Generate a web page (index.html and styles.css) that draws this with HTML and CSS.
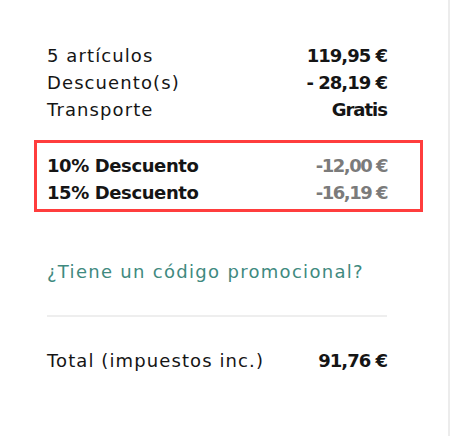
FILE: index.html
```html
<!DOCTYPE html>
<html lang="es">
<head>
<meta charset="utf-8">
<link rel="stylesheet" href="styles.css">
</head>
<body>
<div class="panel">
  <div class="summary">
    <div class="row"><span>5 artículos</span><span class="val">119,95 €</span></div>
    <div class="row"><span>Descuento(s)</span><span class="val">- 28,19 €</span></div>
    <div class="row"><span>Transporte</span><span class="val">Gratis</span></div>
  </div>
  <div class="discounts">
    <div class="row"><span class="dname">10% Descuento</span><span class="dval">-12,00 €</span></div>
    <div class="row"><span class="dname">15% Descuento</span><span class="dval">-16,19 €</span></div>
  </div>
  <a class="promo" href="#">¿Tiene un código promocional?</a>
  <hr class="sep">
  <div class="row total"><span>Total (impuestos inc.)</span><span class="val">91,76 €</span></div>
</div>
</body>
</html>
```
FILE: styles.css
```css
html, body {
  margin: 0;
  padding: 0;
  background: #fff;
}
body {
  font-family: "DejaVu Sans", "Open Sans", sans-serif;
  color: #151515;
  font-size: 18px;
  letter-spacing: 1.1px;
}
.panel {
  box-sizing: border-box;
  width: 450px;
  height: 436px;
  border-right: 2px solid #ececec;
  padding: 42px 61px 0 47px;
}
.row {
  display: flex;
  justify-content: space-between;
  line-height: 27px;
}
.val {
  font-weight: 700;
  letter-spacing: -1px;
}
.discounts {
  margin: 17px -36px 0 -13px;
  border: 3px solid #ff3d3d;
  padding: 9px 33px 3px 10px;
}
.dname {
  font-weight: 700;
  letter-spacing: -0.4px;
}
.dval {
  font-weight: 700;
  color: #7b7b7b;
  letter-spacing: -1.5px;
}
.promo {
  display: block;
  margin-top: 46px;
  color: #3f8a80;
  text-decoration: none;
  line-height: 27px;
  letter-spacing: 1.3px;
}
.sep {
  margin: 30px 0 0;
  border: 0;
  height: 2px;
  background: #eeeeee;
}
.total {
  margin-top: 30px;
}
```
